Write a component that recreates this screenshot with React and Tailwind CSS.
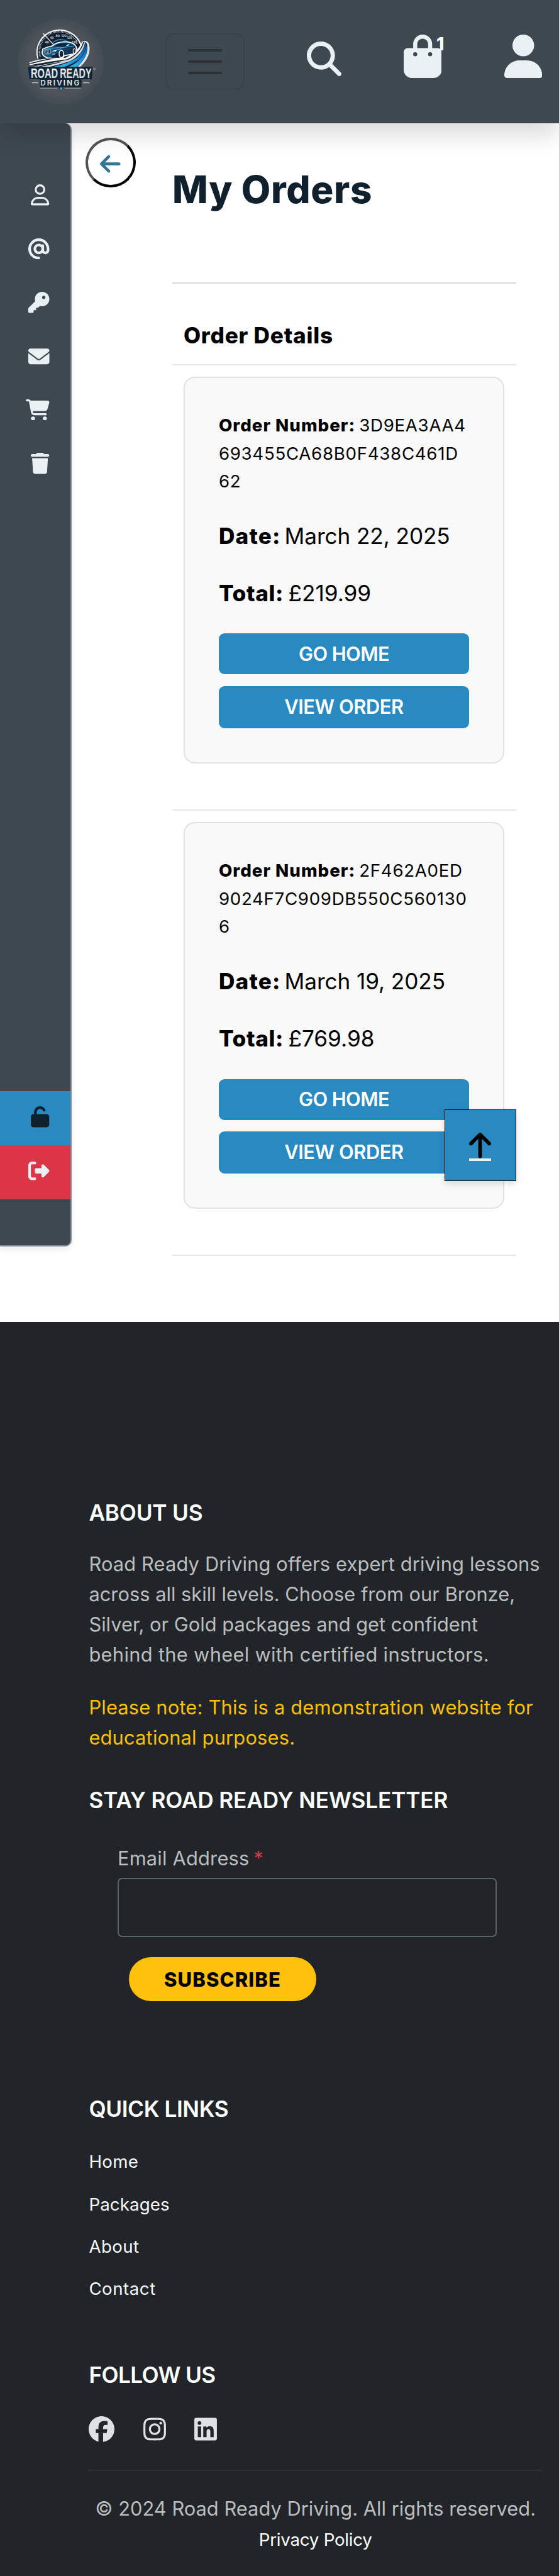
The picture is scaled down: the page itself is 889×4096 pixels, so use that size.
import React from "react";
import {
  FaRegUser,
  FaAt,
  FaKey,
  FaEnvelope,
  FaCartShopping,
  FaTrash,
  FaUnlock,
  FaRightFromBracket,
  FaMagnifyingGlass,
  FaBagShopping,
  FaUser,
  FaArrowLeft,
  FaArrowUp,
  FaFacebook,
  FaInstagram,
  FaLinkedin,
} from "react-icons/fa6";

const polar = (r, deg) => {
  const a = (deg * Math.PI) / 180;
  return [280 + r * Math.cos(a), 222 + r * Math.sin(a)];
};

function Logo() {
  const ticks = [];
  for (let d = 164; d <= 338; d += 4) {
    const [x1, y1] = polar(130, d);
    const [x2, y2] = polar(119, d);
    ticks.push(<line key={d} x1={x1} y1={y1} x2={x2} y2={y2} />);
  }
  return (
    <svg viewBox="18 18 542 542" className="h-[137px] w-[137px]" aria-label="Road Ready Driving">
      <defs>
        <radialGradient id="disc">
          <stop offset="0" stopColor="#555a61" />
          <stop offset="0.75" stopColor="#4d5359" />
          <stop offset="1" stopColor="#434c54" />
        </radialGradient>
        <linearGradient id="blueLane" x1="0" y1="1" x2="1" y2="0">
          <stop offset="0" stopColor="#35c4f5" />
          <stop offset="0.6" stopColor="#1b7fd0" />
          <stop offset="1" stopColor="#0d4c8c" />
        </linearGradient>
        <linearGradient id="carBody" x1="0" y1="0" x2="1" y2="0.4">
          <stop offset="0" stopColor="#1f74a6" />
          <stop offset="0.5" stopColor="#14507c" />
          <stop offset="1" stopColor="#112a43" />
        </linearGradient>
        <linearGradient id="steel" x1="0" y1="0" x2="0" y2="1">
          <stop offset="0" stopColor="#ffffff" />
          <stop offset="1" stopColor="#c9cdd0" />
        </linearGradient>
      </defs>
      <circle cx="289" cy="288" r="270" fill="url(#disc)" />
      <path d="M146 268 A140 138 0 1 1 414 184 L390 260 L200 280 Z" fill="#12202f" />
      <path d="M146 268 A140 138 0 0 1 418 188" fill="none" stroke="#f4f7f8" strokeWidth="8" />
      <g stroke="#dfe5e8" strokeWidth="3.5">{ticks}</g>
      <g fill="#e6ebee" fontFamily="Inter, sans-serif" fontSize="19" fontWeight="600" textAnchor="middle">
        <text x="203" y="173">40</text>
        <text x="234" y="145">40</text>
        <text x="270" y="131">80</text>
        <text x="309" y="131">120</text>
        <text x="345" y="146">120</text>
        <text x="375" y="173">120</text>
      </g>
      <path d="M238 168 Q285 132 336 162" fill="none" stroke="#2a7fc4" strokeWidth="7" />
      <path d="M178 109 L242 178" stroke="#f4f7f8" strokeWidth="5" />
      {/* road lanes */}
      <path d="M92 291 Q230 262 330 262 Q410 225 424 160 Q452 140 470 180 Q474 260 404 320 L140 320 Z" fill="#14222f" />
      <path d="M92 291 Q150 270 215 268 Q160 280 92 297 Z" fill="#f4f7f8" />
      <path d="M95 303 Q250 262 320 262 Q400 222 424 160 L430 162 Q414 232 330 272 Q210 286 95 309 Z" fill="#f4f7f8" />
      <path d="M120 316 Q270 290 345 272 Q420 228 436 164 L442 166 Q430 240 352 282 Q290 304 220 320 L160 320 Q260 300 310 286 Q200 302 150 318 Z" fill="#d8dcde" />
      <path d="M240 320 Q350 296 395 258 Q436 215 446 166 L452 170 Q446 230 404 272 Q360 304 310 320 Z" fill="url(#blueLane)" />
      <path d="M340 320 Q440 276 455 172 L466 180 Q472 262 392 320 Z" fill="url(#blueLane)" />
      <path d="M424 160 Q448 146 466 172 Q488 246 412 320 L396 320 Q472 246 455 176 Q444 158 424 164 Z" fill="#e6e9ea" />
      {/* car */}
      <path
        d="M176 208 Q206 194 232 190 Q262 164 312 162 Q350 162 374 178 Q392 192 390 220 L382 236 L312 250 L300 266 L206 264 Q174 252 172 230 Z"
        fill="url(#carBody)"
        stroke="#f4f7f8"
        strokeWidth="7"
      />
      <path d="M246 190 Q276 172 316 171 L338 174 L312 192 Z" fill="#0f2436" />
      <path d="M322 188 Q336 174 344 176 L336 188 Z" fill="#9fdcf3" />
      <path d="M190 212 Q240 198 300 198 L370 190 M216 240 Q240 214 296 206" fill="none" stroke="#3cb6ea" strokeWidth="4" />
      <path d="M184 214 L228 212 L222 236 Q204 244 190 236 Z" fill="#12202f" stroke="#c9d0d4" strokeWidth="3" />
      <path d="M194 214 L198 238 M204 214 L206 240 M214 214 L214 238" stroke="#c9d0d4" strokeWidth="3" />
      <path d="M234 220 L266 212 L258 224 Z" fill="#f4f7f8" />
      <path d="M236 240 L262 240" stroke="#f4f7f8" strokeWidth="4" />
      <path d="M230 262 L280 262 L288 240 L270 232 L236 250 Z" fill="#12202f" />
      <ellipse cx="293" cy="239" rx="14" ry="23" fill="#14283a" stroke="#ffffff" strokeWidth="6" />
      <ellipse cx="375" cy="220" rx="8" ry="14" fill="#14283a" stroke="#ffffff" strokeWidth="4" />
      {/* lettering */}
      <path d="M84 320 H490 L486 398 H420 V446 H158 V398 H92 Z" fill="#12263a" />
      <g fontFamily="'Liberation Sans', sans-serif" fontWeight="700" fontSize="86" fill="url(#steel)">
        <text transform="translate(101 390) scale(0.675 1)">ROAD</text>
        <text transform="translate(284 390) scale(0.662 1)">READY</text>
      </g>
      <text x="161" y="438" fontSize="46" fontWeight="600" fontFamily="Inter, sans-serif" fill="url(#steel)" letterSpacing="9">
        DRIVING
      </text>
      <circle cx="501" cy="332" r="6" fill="none" stroke="#aab0b4" strokeWidth="2.5" />
      <path d="M108 420 H148 M430 420 H470" stroke="#c9cdd0" strokeWidth="5" />
      <path d="M162 455 H268 M314 455 H416" stroke="#a7adb2" strokeWidth="3" />
      <path d="M274 450 L291 446 L306 450 L298 464 L291 469 L282 464 Z" fill="#1b3048" />
      <circle cx="291" cy="457" r="8" fill="#5f9cc0" />
    </svg>
  );
}

function Header() {
  return (
    <header className="relative z-20 flex h-[196px] items-start bg-[#3e4850] pl-[27.5px] text-[#e9f1f4] shadow-[0_18px_36px_rgba(0,0,0,0.15)]">
      <div className="mt-[30.4px]">
        <Logo />
      </div>
      <button className="mt-[53.2px] ml-[98.5px] flex h-[89.6px] w-[126px] flex-col items-center justify-center gap-[13.6px] rounded-[14px] border-2 border-[#38424a]">
        <span className="h-[4.6px] w-[54.7px] rounded-full bg-[#2b3034]" />
        <span className="h-[4.6px] w-[54.7px] rounded-full bg-[#2b3034]" />
        <span className="h-[4.6px] w-[54.7px] rounded-full bg-[#2b3034]" />
      </button>
      <FaMagnifyingGlass className="mt-[66px] ml-[99.4px] h-[55px] w-[55px]" />
      <div className="relative mt-[55.3px] ml-[98.6px]">
        <FaBagShopping className="h-[69px] w-[60.4px]" />
        <span className="absolute top-[0.5px] left-[52px] text-[28px] leading-[28px] font-extrabold text-white">1</span>
      </div>
      <FaUser className="mt-[55.3px] ml-[99.3px] h-[69px] w-[60.4px]" />
    </header>
  );
}

const menu = [
  { Icon: FaRegUser, size: "w-[29.3px]" },
  { Icon: FaAt, size: "w-[33.5px]" },
  { Icon: FaKey, size: "w-[33.5px]" },
  { Icon: FaEnvelope, size: "w-[33.5px]" },
  { Icon: FaCartShopping, size: "w-[37.7px]" },
  { Icon: FaTrash, size: "w-[29.3px]" },
];

function Sidebar() {
  return (
    <aside className="flex h-[1786px] w-[114px] shrink-0 flex-col rounded-r-[10px] border-r-2 border-b-2 border-[#838e95] bg-[#3e4850] pt-[71.4px] pb-[73px] text-[#e9f1f4] shadow-[0_5px_10px_rgba(0,0,0,0.075)]">
      {menu.map(({ Icon, size }, i) => (
        <div key={i} className="flex h-[85.4px] items-center justify-end pr-[33.5px]">
          <Icon className={"h-[33.5px] " + size} />
        </div>
      ))}
      <div className="mt-auto flex h-[85.3px] items-center justify-end bg-[#288ac1] pr-[33.5px] pb-1 text-[#11202d]">
        <FaUnlock className="h-[33.5px] w-[29.3px]" />
      </div>
      <div className="flex h-[86.5px] items-center justify-end bg-[#dc3545] pr-[33.5px] pb-1">
        <FaRightFromBracket className="h-[33.5px] w-[33.5px]" />
      </div>
    </aside>
  );
}

const big = "text-[35.2px] leading-[48px]";
const button =
  "flex items-center justify-center rounded-[9px] bg-[#288ac1] text-[30.8px] leading-none font-semibold text-white";

function OrderCard({ lines, date, total }) {
  return (
    <section className="mx-[18.4px] mt-[18.2px] h-[615px] rounded-[18px] border-2 border-[#e2e2e2] bg-[#f9f9f9] px-[54px] pt-[53px] whitespace-nowrap text-black">
      <p className="text-[27.7px] leading-[44.7px] tracking-[0.68px]">
        <strong className="-mr-[2.5px] font-extrabold tracking-[1px]">Order Number:</strong> {lines[0]}
        <br />
        {lines[1]}
        <br />
        {lines[2]}
      </p>
      <p className={"mt-[39.6px] " + big}>
        <strong className="-mr-[4px] font-extrabold tracking-[1.2px]">Date:</strong>{" "}
        <span className="tracking-[-0.1px]">{date}</span>
      </p>
      <p className={"mt-[43.2px] " + big}>
        <strong className="-mr-[2.5px] font-extrabold tracking-[0.6px]">Total:</strong> {total}
      </p>
      <button className={"mt-[40.7px] h-[65px] w-full tracking-[-0.6px] " + button}>GO HOME</button>
      <button className={"mt-[18.4px] h-[67px] w-full tracking-[-0.38px] " + button}>VIEW ORDER</button>
    </section>
  );
}

function Orders() {
  return (
    <main className="flex flex-1 items-start">
      <button className="mt-[22.8px] ml-[21.5px] flex h-[79px] w-[80px] items-center justify-center rounded-full border-[4.6px] border-t-[#545454] border-r-black border-b-black border-l-[#545454] pt-1 text-[#307593]">
        <FaArrowLeft className="h-[37.2px] w-[32.6px]" />
      </button>
      <div className="ml-[58px] w-[547px] pt-[69.8px]">
        <h1 className="pl-[0.5px] text-[60.2px] leading-[72px] font-extrabold tracking-[0.65px] text-[#11202d]">My Orders</h1>
        <div className="mt-[111.7px] h-[2px] bg-[#dadada]" />
        <h2 className="mt-[59.2px] pl-[18.4px] text-[35.2px] leading-[44px] font-extrabold tracking-[0.78px] text-black">
          Order Details
        </h2>
        <div className="mt-[24px] h-[2px] bg-[#e4e7ea]" />
        <OrderCard lines={["3D9EA3AA4", "693455CA68B0F438C461D", "62"]} date="March 22, 2025" total="£219.99" />
        <div className="mt-[73px] h-[2px] bg-[#e4e7ea]" />
        <OrderCard lines={["2F462A0ED", "9024F7C909DB550C560130", "6"]} date="March 19, 2025" total="£769.98" />
        <div className="mt-[73px] h-[2px] bg-[#e4e7ea]" />
      </div>
    </main>
  );
}

const heading = "text-[35.2px] leading-[44px] font-semibold text-white";

function Footer() {
  return (
    <footer className="h-[1994.4px] bg-[#212529] pt-[281px] pr-[27px] pl-[141.4px] whitespace-nowrap text-[#bcbdbf]">
      <h3 className={"tracking-[-0.2px] " + heading}>ABOUT US</h3>
      <p className="mt-[36.1px] text-[30.8px] leading-[48.25px]">
        <span className="tracking-[0.15px]">Road Ready Driving offers expert driving lessons</span>
        <br />
        <span className="tracking-[0.02px]">across all skill levels. Choose from our Bronze,</span>
        <br />
        <span className="tracking-[0px]">Silver, or Gold packages and get confident</span>
        <br />
        <span className="tracking-[0.33px]">behind the wheel with certified instructors.</span>
      </p>
      <p className="mt-[35.2px] text-[30.8px] leading-[48.25px] tracking-[0.2px] text-[#ffc107]">
        Please note: This is a demonstration website for
        <br />
        educational purposes.
      </p>
      <h3 className={"mt-[53.1px] tracking-[-0.15px] " + heading}>STAY ROAD READY NEWSLETTER</h3>
      <form className="mt-[46.4px] ml-[45.6px] w-[603.3px]">
        <label className="block text-[30.8px] leading-[48.25px] tracking-[0.2px]">
          Email Address <span className="-ml-[2px] text-[#dc3545]">*</span>
        </label>
        <div className="mt-[7px] h-[94px] rounded-[7px] border-2 border-[#5a646b]" />
        <button className="mt-[32px] ml-[18px] flex h-[70px] w-[298px] items-center justify-center rounded-full bg-[#ffc10b] text-[31px] leading-none font-extrabold tracking-[1.1px] text-black">
          SUBSCRIBE
        </button>
      </form>
      <h3 className={"mt-[149.2px] tracking-[-0.38px] " + heading}>QUICK LINKS</h3>
      <nav className="mt-[29.2px] flex flex-col text-[27.7px] leading-[67.3px] text-[#f8f9fa]">
        <a className="tracking-[0.3px]">Home</a>
        <a className="tracking-[0.1px]">Packages</a>
        <a className="tracking-[0.4px]">About</a>
        <a className="tracking-[0.5px]">Contact</a>
      </nav>
      <h3 className={"mt-[80.1px] tracking-[-0.6px] " + heading}>FOLLOW US</h3>
      <div className="mt-[44.6px] flex h-[41px] items-center text-[#dee2e6]">
        <FaFacebook className="h-[41px] w-[41px]" />
        <FaInstagram className="ml-[45.3px] h-[41px] w-[36px]" />
        <FaLinkedin className="ml-[45.3px] h-[41px] w-[36px]" />
      </div>
      <div className="mt-[43.2px] h-[2px] bg-[#2d3135]" />
      <p className="mt-[36.3px] text-center text-[30.8px] leading-[48px] tracking-[0.02px]">
        © 2024 Road Ready Driving. All rights reserved.
      </p>
      <p className="mt-[3.4px] text-center text-[27.7px] leading-[44px] tracking-[-0.25px] text-white">Privacy Policy</p>
    </footer>
  );
}

export default function App() {
  return (
    <div className="relative h-[4096px] w-[889px] overflow-hidden bg-white font-['Inter',sans-serif]">
      <Header />
      <div className="flex h-[1905.6px] items-start">
        <Sidebar />
        <Orders />
      </div>
      <Footer />
      <a className="absolute top-[1764.4px] left-[706.8px] z-10 flex h-[114px] w-[114px] flex-col items-center border-[1.5px] border-black bg-[#288ac1] pt-[32.8px] text-black shadow-[0_5px_10px_rgba(0,0,0,0.12)]">
        <FaArrowUp className="h-[46.6px] w-[35px]" />
        <span className="-mt-[3px] h-[4.4px] w-[35px] bg-[#e9f1f4]" />
      </a>
    </div>
  );
}
